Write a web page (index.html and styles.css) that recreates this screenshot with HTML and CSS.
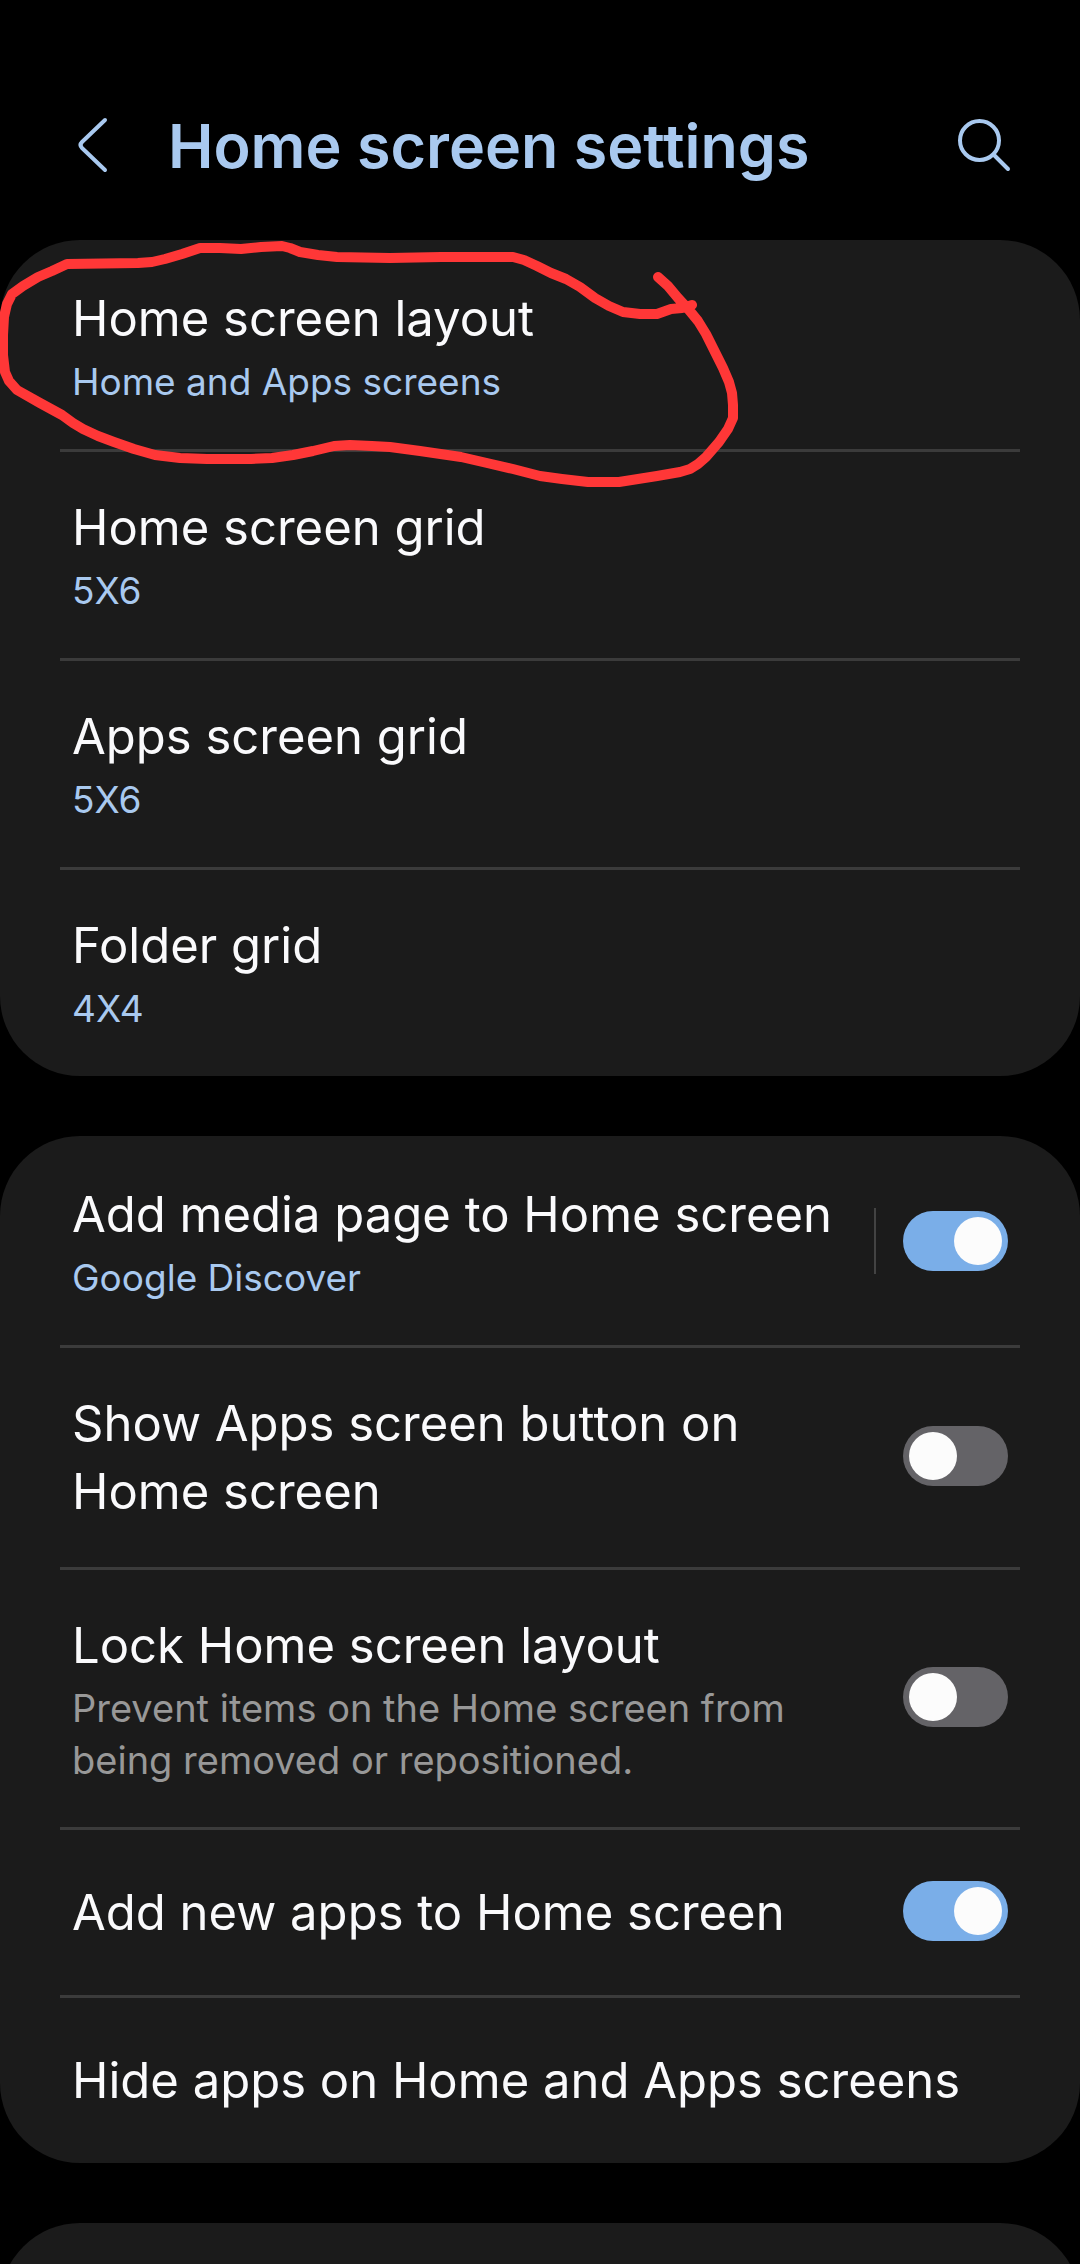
FILE: index.html
```html
<!DOCTYPE html>
<html lang="en">
<head>
  <meta charset="utf-8">
  <meta name="viewport" content="width=device-width, initial-scale=1">
  <title>Home screen settings</title>
  <link rel="stylesheet" href="styles.css">
</head>
<body>
  <div class="page">
    <header class="app-bar">
      <button class="icon-button" type="button" aria-label="Back">
        <svg viewBox="0 0 72 72" aria-hidden="true"><path d="M45 11 22 33Q19 36 22 39L45 61"/></svg>
      </button>
      <h1 class="app-bar-title">Home screen settings</h1>
      <button class="icon-button" type="button" aria-label="Search">
        <svg viewBox="0 0 72 72" aria-hidden="true"><circle cx="31.500" cy="31.500" r="19.500"/><path d="M46 46 60 60"/></svg>
      </button>
    </header>

    <main class="groups">
      <section class="card">
        <a class="row" href="#layout">
          <span class="row-text">
            <span class="row-title">Home screen layout</span>
            <span class="row-value">Home and Apps screens</span>
          </span>
        </a>
        <a class="row" href="#home-grid">
          <span class="row-text">
            <span class="row-title">Home screen grid</span>
            <span class="row-value">5X6</span>
          </span>
        </a>
        <a class="row" href="#apps-grid">
          <span class="row-text">
            <span class="row-title">Apps screen grid</span>
            <span class="row-value">5X6</span>
          </span>
        </a>
        <a class="row" href="#folder-grid">
          <span class="row-text">
            <span class="row-title">Folder grid</span>
            <span class="row-value">4X4</span>
          </span>
        </a>
      </section>

      <section class="card">
        <label class="row row-split">
          <span class="row-text">
            <span class="row-title">Add media page to Home screen</span>
            <span class="row-value">Google Discover</span>
          </span>
          <span class="row-separator"></span>
          <input class="switch" type="checkbox" role="switch" checked>
        </label>
        <label class="row">
          <span class="row-text">
            <span class="row-title">Show Apps screen button on Home screen</span>
          </span>
          <input class="switch" type="checkbox" role="switch">
        </label>
        <label class="row">
          <span class="row-text">
            <span class="row-title">Lock Home screen layout</span>
            <span class="row-description">Prevent items on the Home screen from being removed or repositioned.</span>
          </span>
          <input class="switch" type="checkbox" role="switch">
        </label>
        <label class="row">
          <span class="row-text">
            <span class="row-title">Add new apps to Home screen</span>
          </span>
          <input class="switch" type="checkbox" role="switch" checked>
        </label>
        <a class="row" href="#hide-apps">
          <span class="row-text">
            <span class="row-title">Hide apps on Home and Apps screens</span>
          </span>
        </a>
      </section>

      <section class="card card-next"></section>
    </main>

    <!-- Hand-drawn ring around the first setting -->
    <svg class="markup" viewBox="0 0 760 500" aria-hidden="true">
      <path d="M658 277 668 286 678 298 689 310 698 321 706 334 714 350 723 368 729 382 732 393 733 405 733 418 728 429 719 442 706 457 698 464 690 469 680 472 657 476 619 482 588 482 562 479 540 476 513 469 487 463 461 457 420 451 390 447 372 446 350 445 334 446 313 451 293 455 272 458 251 459 207 459 180 458 155 455 134 449 114 442 98 436 83 429 73 423 62 415 40 403 17 390 9 381 5 372 3 355 3 335 4 317 7 304 12 294 23 286 38 277 52 271 67 264 138 263 152 262 165 259 182 254 200 248 220 248 241 249 261 247 282 246 290 248 300 252 318 255 337 257 390 258 441 257 513 257 524 260 537 266 551 273 566 279 580 287 595 298 609 306 623 312 640 314 657 314 671 309 682 308 692 305"/>
    </svg>
  </div>
</body>
</html>
```
FILE: styles.css
```css
* {
  box-sizing: border-box;
}

body {
  margin: 0;
  background: #000;
  color: #fafafc;
  font-family: Inter, "Open Sans", sans-serif;
}

.page {
  position: relative;
  height: 100vh;
  overflow: hidden auto;
  scrollbar-width: none;
}

/* App bar */
.app-bar {
  display: flex;
  align-items: center;
  gap: 36px;
  padding: 108px 60px 58px;
  color: #a9c9ef;
}

.app-bar-title {
  flex: 1;
  margin: 0;
  padding-top: 2px;
  font-size: 61px;
  font-weight: 600;
  line-height: 72px;
}

.icon-button {
  width: 72px;
  height: 72px;
  padding: 0;
  border: 0;
  background: none;
  color: inherit;
}

.icon-button svg {
  display: block;
  fill: none;
  stroke: currentColor;
  stroke-width: 4;
  stroke-linecap: round;
  stroke-linejoin: round;
}

/* Setting groups */
.groups {
  display: flex;
  flex-direction: column;
  gap: 60px;
}

.card {
  padding: 0 60px;
  border-radius: 80px;
  background: #1b1b1b;
}

.card-next {
  min-height: 168px;
}

.row {
  display: flex;
  align-items: center;
  gap: 45px;
  min-height: 168px;
  padding: 38px 12px 41px;
  border-top: 3px solid #3b3b3b;
  color: inherit;
  text-decoration: none;
}

.row:first-child {
  border-top-color: transparent;
}

.row-split {
  gap: 27px;
}

.row-text {
  flex: 1;
  padding-top: 4px;
}

.row-title,
.row-value,
.row-description {
  display: block;
}

.row-title {
  font-size: 49px;
  line-height: 68px;
}

.row-value {
  margin-top: 3px;
  color: #a9c9ef;
  font-size: 37px;
  line-height: 52px;
}

.row-description {
  margin-top: 2px;
  color: #989898;
  font-size: 38px;
  line-height: 52px;
}

.row-separator {
  width: 2px;
  height: 66px;
  background: #434343;
}

/* Switch */
.switch {
  appearance: none;
  flex: none;
  display: flex;
  width: 105px;
  height: 60px;
  margin: 0;
  padding: 6px;
  border-radius: 30px;
  background: #646367;
}

.switch::before {
  content: "";
  width: 48px;
  height: 48px;
  border-radius: 50%;
  background: #fcfcfc;
}

.switch:checked {
  justify-content: flex-end;
  background: #7aaee8;
}

.markup {
  position: absolute;
  top: 0;
  left: 0;
  width: 760px;
  height: 500px;
  pointer-events: none;
  fill: none;
  stroke: #ff3737;
  stroke-width: 10;
  stroke-linecap: round;
  stroke-linejoin: round;
}
```
